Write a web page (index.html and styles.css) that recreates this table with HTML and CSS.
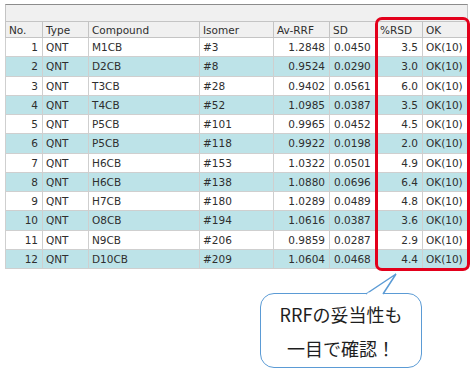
FILE: index.html
```html
<!DOCTYPE html>
<html lang="ja">
<head>
<meta charset="utf-8">
<title>RRF</title>
<link rel="stylesheet" href="styles.css">
</head>
<body>
<div class="page">
  <div class="grid-wrap">
    <div class="toolbar"></div>
    <table class="grid">
      <colgroup>
        <col class="c-no"><col class="c-type"><col class="c-comp"><col class="c-iso">
        <col class="c-rrf"><col class="c-sd"><col class="c-rsd"><col class="c-ok">
      </colgroup>
      <thead>
        <tr><th>No.</th><th>Type</th><th>Compound</th><th>Isomer</th><th>Av-RRF</th><th>SD</th><th>%RSD</th><th>OK</th></tr>
      </thead>
      <tbody>
        <tr><td class="num">1</td><td>QNT</td><td>M1CB</td><td>#3</td><td class="num">1.2848</td><td class="sd">0.0450</td><td class="num">3.5</td><td>OK(10)</td></tr>
        <tr class="alt"><td class="num">2</td><td>QNT</td><td>D2CB</td><td>#8</td><td class="num">0.9524</td><td class="sd">0.0290</td><td class="num">3.0</td><td>OK(10)</td></tr>
        <tr><td class="num">3</td><td>QNT</td><td>T3CB</td><td>#28</td><td class="num">0.9402</td><td class="sd">0.0561</td><td class="num">6.0</td><td>OK(10)</td></tr>
        <tr class="alt"><td class="num">4</td><td>QNT</td><td>T4CB</td><td>#52</td><td class="num">1.0985</td><td class="sd">0.0387</td><td class="num">3.5</td><td>OK(10)</td></tr>
        <tr><td class="num">5</td><td>QNT</td><td>P5CB</td><td>#101</td><td class="num">0.9965</td><td class="sd">0.0452</td><td class="num">4.5</td><td>OK(10)</td></tr>
        <tr class="alt"><td class="num">6</td><td>QNT</td><td>P5CB</td><td>#118</td><td class="num">0.9922</td><td class="sd">0.0198</td><td class="num">2.0</td><td>OK(10)</td></tr>
        <tr><td class="num">7</td><td>QNT</td><td>H6CB</td><td>#153</td><td class="num">1.0322</td><td class="sd">0.0501</td><td class="num">4.9</td><td>OK(10)</td></tr>
        <tr class="alt"><td class="num">8</td><td>QNT</td><td>H6CB</td><td>#138</td><td class="num">1.0880</td><td class="sd">0.0696</td><td class="num">6.4</td><td>OK(10)</td></tr>
        <tr><td class="num">9</td><td>QNT</td><td>H7CB</td><td>#180</td><td class="num">1.0289</td><td class="sd">0.0489</td><td class="num">4.8</td><td>OK(10)</td></tr>
        <tr class="alt"><td class="num">10</td><td>QNT</td><td>O8CB</td><td>#194</td><td class="num">1.0616</td><td class="sd">0.0387</td><td class="num">3.6</td><td>OK(10)</td></tr>
        <tr><td class="num">11</td><td>QNT</td><td>N9CB</td><td>#206</td><td class="num">0.9859</td><td class="sd">0.0287</td><td class="num">2.9</td><td>OK(10)</td></tr>
        <tr class="alt"><td class="num">12</td><td>QNT</td><td>D10CB</td><td>#209</td><td class="num">1.0604</td><td class="sd">0.0468</td><td class="num">4.4</td><td>OK(10)</td></tr>
      </tbody>
    </table>
    <div class="highlight"></div>
  </div>
  <div class="callout">
    <svg class="tail" width="36" height="22" viewBox="0 0 36 22">
      <path d="M1 21 L31 1 L18 21" fill="#fff" stroke="#5b9bd5" stroke-width="1.5" stroke-linejoin="miter"/>
      <rect x="2.5" y="19.6" width="14.5" height="3" fill="#fff"/>
    </svg>
    <p class="callout-text">RRFの妥当性も<br>一目で確認！</p>
  </div>
</div>
</body>
</html>
```

FILE: styles.css
```css
html, body {
  margin: 0;
  padding: 0;
  background: #ffffff;
}

.page {
  width: 473px;
  height: 388px;
  padding: 4px 0 0 5px;
  box-sizing: border-box;
}

.grid-wrap {
  position: relative;
  width: 462px;
}

.toolbar {
  height: 16px;
  background: #f0f0f0;
  border-top: 1px solid #8c8c8c;
  border-left: 1px solid #c4c4c4;
  border-right: 1px solid #c4c4c4;
  box-sizing: content-box;
  margin-right: -1px;
}

.grid {
  width: 463px;
  table-layout: fixed;
  border-collapse: collapse;
  font-family: "DejaVu Sans", Verdana, sans-serif;
  font-size: 10.5px;
  color: #2e2e2e;
}

.c-no { width: 37px; }
.c-type { width: 46px; }
.c-comp { width: 111px; }
.c-iso { width: 74px; }
.c-rrf { width: 56px; }
.c-sd { width: 47px; }
.c-rsd { width: 46px; }
.c-ok { width: 46px; }

.grid th, .grid td {
  border: 1px solid #cfcfcf;
  padding: 0 3px 0 3px;
  text-align: left;
  white-space: nowrap;
  overflow: hidden;
  font-weight: normal;
}

.grid thead tr {
  height: 16px;
}

.grid th {
  background: #f0f0f0;
  border-color: #c4c4c4;
  line-height: 14px;
  padding-top: 1px;
}

.grid tbody tr {
  height: 19.25px;
  background: #ffffff;
}

.grid tbody tr.alt {
  background: #bde3e8;
}

.grid td.num {
  text-align: right;
  padding-right: 4px;
}

.grid td.sd {
  padding-left: 4px;
}

.highlight {
  position: absolute;
  left: 370px;
  top: 13px;
  width: 89px;
  height: 248px;
  border: 3px solid #e3001b;
  border-radius: 7px;
}

.callout {
  position: relative;
  margin: 24px 0 0 255px;
  width: 162px;
  height: 75px;
  box-sizing: border-box;
  border: 1.5px solid #5b9bd5;
  border-radius: 14px;
  background: #ffffff;
}

.tail {
  position: absolute;
  left: 104px;
  top: -21px;
  overflow: visible;
}

.callout-text {
  margin: 0;
  padding-top: 3px;
  text-align: center;
  font-family: "Noto Sans CJK JP", "Noto Sans", sans-serif;
  font-size: 18px;
  line-height: 34px;
  color: #1e1e1e;
}
```
